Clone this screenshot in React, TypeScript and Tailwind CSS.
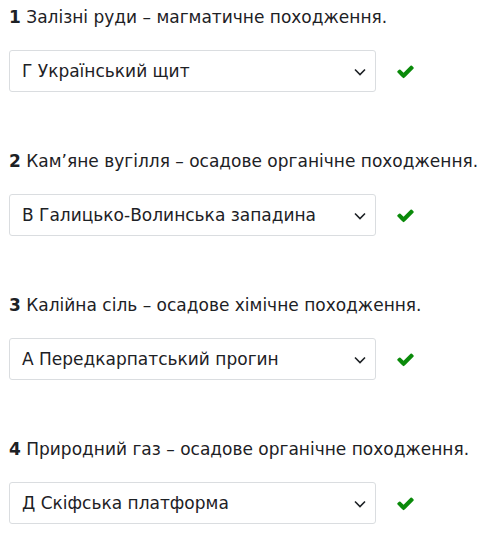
const items = [
  { n: 1, q: "Залізні руди – магматичне походження.", a: "Г Український щит" },
  { n: 2, q: "Кам’яне вугілля – осадове органічне походження.", a: "В Галицько-Волинська западина" },
  { n: 3, q: "Калійна сіль – осадове хімічне походження.", a: "А Передкарпатський прогин" },
  { n: 4, q: "Природний газ – осадове органічне походження.", a: "Д Скіфська платформа" },
];

function Check() {
  return (
    <svg className="w-[19px] h-[19px] text-[#0a8a0a]" viewBox="0 0 1792 1792" fill="currentColor">
      <path d="M1671 566q0 40-28 68l-724 724-136 136q-28 28-68 28t-68-28l-136-136-362-362q-28-28-28-68t28-68l136-136q28-28 68-28t68 28l294 295 656-657q28-28 68-28t68 28l136 136q28 28 28 68z" />
    </svg>
  );
}

function Chevron() {
  return (
    <svg className="w-[12px] h-[8px]" viewBox="0 0 12 8" fill="none" stroke="#1d2125" strokeWidth="1.6">
      <path d="M1 1.5l5 5 5-5" />
    </svg>
  );
}

export default function App() {
  return (
    <div className="min-h-screen bg-white pl-[9px] pt-[6px] text-[#1d2125] font-['DejaVu_Sans',sans-serif] text-[17px]">
      {items.map((it) => (
        <div key={it.n} className="mb-[58px]">
          <p className="leading-[22px] mb-[22px] whitespace-nowrap">
            <span className="font-bold">{it.n}</span> {it.q}
          </p>
          <div className="flex items-center">
            <div className="w-[367px] h-[42px] border border-[#dadde0] rounded-[3px] flex items-center justify-between pl-[12px] pr-[9px] pt-[2px]">
              <span>{it.a}</span>
              <Chevron />
            </div>
            <div className="ml-[20px] pt-[1px]">
              <Check />
            </div>
          </div>
        </div>
      ))}
    </div>
  );
}
